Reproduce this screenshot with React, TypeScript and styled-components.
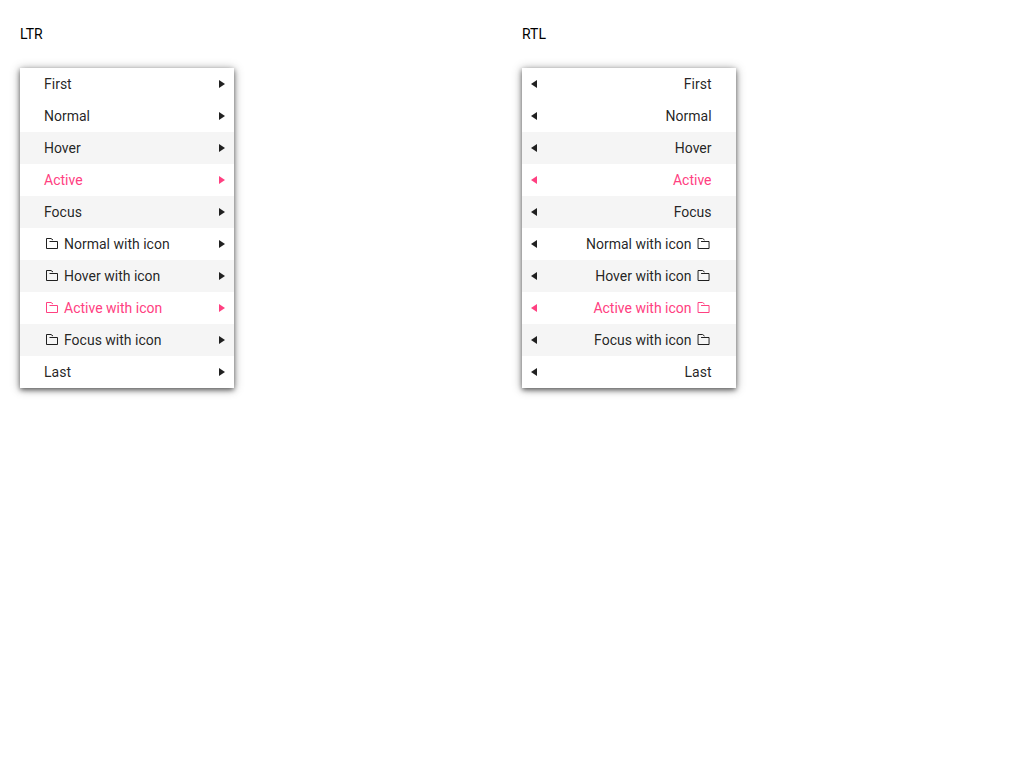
import React from "react";
import styled, { createGlobalStyle } from "styled-components";

const GlobalStyle = createGlobalStyle`
  body {
    margin: 0;
    background: #fff;
    color: #000;
    font: 400 14px/20px Roboto, sans-serif;
  }
`;

const Page = styled.main`
  display: grid;
  grid-template-columns: 482px 482px;
  column-gap: 20px;
  padding: 24px 20px;
`;

const Title = styled.h4`
  margin: 0 0 24px;
  font-size: 14px;
  font-weight: 400;
  line-height: 20px;
`;

const Menu = styled.ul`
  width: 213.55px;
  margin: 0;
  padding: 0;
  list-style: none;
  background: #fff;
  color: rgba(0, 0, 0, 0.87);
  box-shadow: 0 2px 5px rgba(0, 0, 0, 0.55), 0 1px 10px rgba(0, 0, 0, 0.3);
`;

type State = "normal" | "hover" | "active" | "focus";

const Item = styled.li<{ $state: State }>`
  display: flex;
  align-items: center;
  height: 32px;
  box-sizing: border-box;
  padding-inline: 24px 9px;
  background: ${(p) => (p.$state === "hover" || p.$state === "focus" ? "#f5f5f5" : "#fff")};
  color: ${(p) => (p.$state === "active" ? "#ff4081" : "inherit")};
`;

const Label = styled.span`
  flex: 1;
`;

const FolderSvg = styled.svg`
  width: 16px;
  height: 16px;
  margin-inline-end: 4px;
`;

const Arrow = styled.span`
  border: 4px solid transparent;
  border-inline-start: 6px solid currentColor;
  border-inline-end: 0;
`;

const Folder = ({ shift }: { shift: number }) => (
  <FolderSvg viewBox="0 0 16 16" fill="none" stroke="currentColor">
    <path transform={`translate(${shift} 0)`} d="M5.5 5.5H13.5V12.5H2.5V2.5H7L9 4" />
  </FolderSvg>
);

const items: { label: string; state: State; icon?: boolean }[] = [
  { label: "First", state: "normal" },
  { label: "Normal", state: "normal" },
  { label: "Hover", state: "hover" },
  { label: "Active", state: "active" },
  { label: "Focus", state: "focus" },
  { label: "Normal with icon", state: "normal", icon: true },
  { label: "Hover with icon", state: "hover", icon: true },
  { label: "Active with icon", state: "active", icon: true },
  { label: "Focus with icon", state: "focus", icon: true },
  { label: "Last", state: "normal" },
];

const MenuSection = ({ dir }: { dir: "ltr" | "rtl" }) => (
  <section>
    <Title>{dir.toUpperCase()}</Title>
    <Menu dir={dir}>
      {items.map((item) => (
        <Item key={item.label} $state={item.state}>
          {item.icon && <Folder shift={dir === "rtl" ? -0.45 : 0} />}
          <Label>{item.label}</Label>
          <Arrow />
        </Item>
      ))}
    </Menu>
  </section>
);

export default function App() {
  return (
    <>
      <GlobalStyle />
      <Page>
        <MenuSection dir="ltr" />
        <MenuSection dir="rtl" />
      </Page>
    </>
  );
}
